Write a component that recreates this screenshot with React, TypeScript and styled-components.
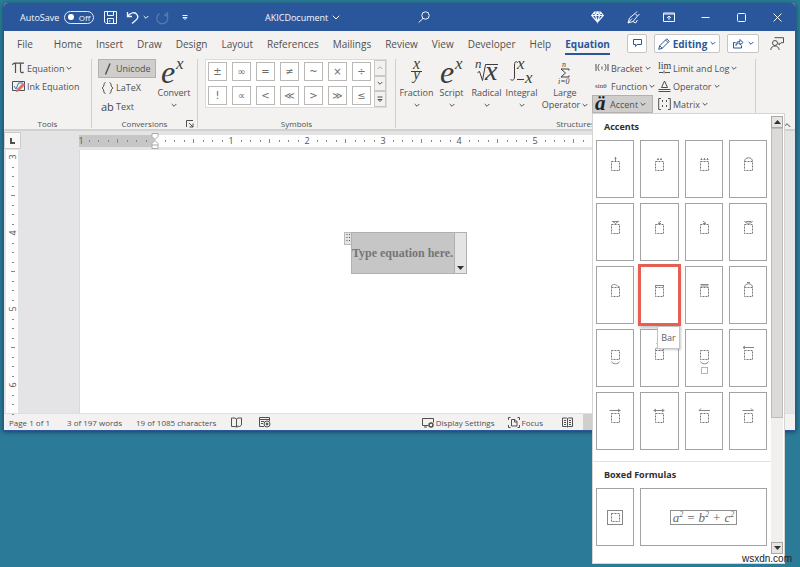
import React from "react";
import styled, { createGlobalStyle, css } from "styled-components";

const UI = `"Open Sans", "Noto Sans", sans-serif`;
const MATH = `"Liberation Serif", serif`;

const Global = createGlobalStyle`
  * { box-sizing: border-box; }
  body { margin: 0; background: #2b7b98; font-family: ${UI}; color: #505050; }
  button { font: inherit; color: inherit; background: none; border: 0; padding: 0; margin: 0; white-space: nowrap; }
  svg { display: block; flex: none; overflow: visible; }
  h2 { margin: 0; }
`;

const Desktop = styled.div`
  position: relative;
  min-height: 100vh;
  padding: 3px 4px 4px 3px;
`;

const WordWindow = styled.main`
  border: 1px solid #2b579a;
  border-top: 0;
  border-radius: 4px 4px 0 0;
  box-shadow: 0 1px 4px rgba(0, 20, 50, 0.55);
  background: #f3f2f1;
`;

/* Title bar */
const TitleBar = styled.header`
  display: grid;
  grid-template-columns: 33% 153px 1fr auto;
  align-items: center;
  height: 28px;
  border-radius: 4px 4px 0 0;
  background: #2a579b;
  color: #f4f7fc;
  font-size: 9px;
`;
const QuickAccess = styled.div`
  display: flex;
  align-items: center;
  padding-left: 16px;
`;
const AutoSave = styled.label`
  display: flex;
  align-items: center;
  gap: 5px;
`;
const Toggle = styled.button`
  display: flex;
  align-items: center;
  gap: 5px;
  width: 30px;
  height: 13px;
  padding: 0 3px;
  border: 1px solid #e4ebf6;
  border-radius: 7px;
  font-size: 8px;
  line-height: 11px;
`;
const Knob = styled.span`
  width: 6px;
  height: 6px;
  border-radius: 50%;
  background: #fff;
`;
const QuickButton = styled.button<{ $gap: number; $dim?: boolean }>`
  margin-left: ${(p) => p.$gap}px;
  opacity: ${(p) => (p.$dim ? 0.22 : 1)};
`;
const DocTitle = styled.button`
  display: flex;
  align-items: center;
  gap: 4px;
  justify-self: start;
`;
const SearchButton = styled.button`
  justify-self: start;
`;
const WindowButtons = styled.div`
  display: flex;
`;
const WindowButton = styled.button`
  display: grid;
  place-items: center;
  width: 36px;
  height: 28px;
`;

/* Tabs */
const TabRow = styled.nav`
  display: flex;
  align-items: center;
  height: 25px;
  padding: 0 11px 0 6px;
`;
const Tab = styled.button<{ $active?: boolean; $first?: boolean }>`
  height: 23px;
  padding: 1px 7px 0;
  margin-right: ${(p) => (p.$first ? 7 : 0)}px;
  font-size: 10px;
  line-height: 18px;
  span {
    display: block;
  }
  ${(p) =>
    p.$active &&
    css`
      color: #2a579b;
      font-weight: 700;
      span {
        box-shadow: 0 2px 0 #2a579b;
      }
    `}
`;
const TabTools = styled.div`
  display: flex;
  align-items: center;
  gap: 7px;
  margin-left: auto;
`;
const ToolButton = styled.button<{ $width: number }>`
  display: flex;
  align-items: center;
  justify-content: center;
  gap: 3px;
  width: ${(p) => p.$width}px;
  height: 19px;
  border: 1px solid #c6c5c4;
  border-radius: 2px;
  background: #fff;
  color: #2a579b;
  font-size: 10px;
  font-weight: 700;
`;
const PresenceButton = styled.button`
  margin-left: 4px;
`;

/* Ribbon */
const Ribbon = styled.section`
  display: flex;
  height: 75px;
  padding: 3px 0 1px;
  border-bottom: 2px solid #d2d1d0;
`;
const Group = styled.section<{ $width: number; $pad: number }>`
  display: flex;
  flex-direction: column;
  justify-content: space-between;
  width: ${(p) => p.$width}px;
  padding-left: ${(p) => p.$pad}px;
  border-right: 1px solid #d0cfce;
`;
const GroupBody = styled.div<{ $gap?: number }>`
  display: flex;
  align-items: flex-start;
  gap: ${(p) => p.$gap ?? 0}px;
`;
const GroupFooter = styled.footer<{ $pad: number }>`
  display: flex;
  justify-content: center;
  align-items: center;
  height: 8px;
  margin-left: -${(p) => p.$pad}px;
  font-size: 8px;
  line-height: 8px;
`;
const Launcher = styled.button`
  position: absolute;
  right: 3px;
  bottom: 0;
`;
const LauncherGroup = styled(Group)`
  position: relative;
`;
const Stack = styled.div<{ $width?: number }>`
  display: flex;
  flex-direction: column;
  width: ${(p) => (p.$width ? `${p.$width}px` : "auto")};
`;
const SmallButton = styled.button<{ $height: number; $on?: boolean }>`
  display: flex;
  align-items: center;
  gap: 2px;
  width: 100%;
  height: ${(p) => p.$height}px;
  padding: 0 2px;
  border: 1px solid ${(p) => (p.$on ? "#b3b2b1" : "transparent")};
  background: ${(p) => (p.$on ? "#cfcecd" : "transparent")};
  font-size: 9px;
`;
const LargeButton = styled.button<{ $width: number }>`
  display: flex;
  flex-direction: column;
  align-items: center;
  width: ${(p) => p.$width}px;
  font-size: 9px;
  line-height: 12px;
`;
const LabelRow = styled.span`
  display: flex;
  align-items: center;
  gap: 2px;
`;
const ChevronSlot = styled.span`
  display: grid;
  place-items: center;
  height: 12px;
`;

const Gallery = styled.div`
  display: flex;
  width: 182px;
  height: 49px;
  background: #fff;
  border: 1px solid #dddcdb;
`;
const SymbolGrid = styled.div`
  display: grid;
  grid-template-columns: repeat(7, 19px);
  grid-auto-rows: 19px;
  gap: 5px;
  padding: 2px;
`;
const SymbolButton = styled.button`
  border: 1px solid #b9b8b7;
  background: #fff;
  color: #6c6c6c;
  font-family: "DejaVu Sans", sans-serif;
  font-size: 10px;
  line-height: 16px;
`;
const GalleryScroll = styled.div`
  display: grid;
  grid-template-rows: repeat(3, 1fr);
  width: 12px;
  margin-left: auto;
`;
const GalleryArrow = styled.button`
  display: grid;
  place-items: center;
  border: 1px solid #c9c8c7;
  background: #f3f2f1;
`;
const MenuAnchor = styled.div`
  position: relative;
`;
const CollapseButton = styled.button`
  align-self: flex-end;
  margin-left: auto;
  margin-right: 4px;
`;

/* Accent menu */
const Menu = styled.div`
  position: absolute;
  z-index: 2;
  top: 100%;
  left: 0;
  display: flex;
  width: 193px;
  padding: 2px 1px 9px 0;
  border: 1px solid #d6d5d4;
  background: #fff;
  color: #333;
`;
const MenuBody = styled.div`
  flex: 1;
  padding-bottom: 8px;
`;
const MenuHeading = styled.h2`
  padding-left: 11px;
  font-size: 9px;
  line-height: 22px;
  font-weight: 700;
  color: #2f2f2f;
`;
const CardGrid = styled.div<{ $columns: string }>`
  display: grid;
  grid-template-columns: ${(p) => p.$columns};
  grid-auto-rows: 58px;
  gap: 5px 6px;
  padding: 2px 4px 0 3px;
`;
const Card = styled.button<{ $selected?: boolean }>`
  position: relative;
  display: grid;
  place-items: center;
  border: 1px solid #a3a3a3;
  background: #fff;
  ${(p) =>
    p.$selected &&
    css`
      outline: 2px solid #e75e54;
      border-color: #e75e54;
      box-shadow: 0 3px 4px 1px rgba(0, 0, 0, 0.25);
    `}
`;
const Divider = styled.hr`
  height: 1px;
  margin: 11px 0 2px;
  border: 0;
  background: #e3e2e1;
`;
const Tooltip = styled.span`
  position: absolute;
  z-index: 3;
  left: 16px;
  top: 59px;
  padding: 3px;
  border: 1px solid #c4c4c4;
  background: #fff;
  font-size: 9px;
  line-height: 15px;
  color: #606060;
  box-shadow: 1px 1px 2px rgba(0, 0, 0, 0.2);
`;
const Formula = styled.span`
  padding: 0 2px;
  border: 1px solid #8f8f8f;
  color: #666;
  font: italic 13px/13px ${MATH};
  sup {
    font-size: 8px;
    line-height: 1px;
  }
`;
const ScrollTrack = styled.div`
  display: flex;
  flex-direction: column;
  width: 12px;
  background: #f1f0ef;
`;
const ScrollArrow = styled.button`
  display: grid;
  place-items: center;
  height: 12px;
  border: 1px solid #aaa9a8;
  background: #e6e5e4;
`;
const ScrollThumb = styled.div`
  height: 290px;
  margin-bottom: auto;
  border: 1px solid #bdbcbb;
  background: #dbdad9;
`;

/* Document */
const RulerRow = styled.div`
  display: flex;
  align-items: center;
  height: 19px;
  background: #e4e4e4;
`;
const TabStop = styled.button`
  display: grid;
  place-items: center;
  width: 17px;
  height: 17px;
  border: 1px solid #cbcbcb;
  background: #f8f8f8;
`;
const HorizontalRuler = styled.div`
  flex: 1;
  min-width: 0;
  height: 16px;
  margin-left: 58px;
  margin-right: 11px;
  overflow: hidden;
`;
const Workspace = styled.div`
  display: flex;
  min-height: 263px;
  background: #e4e4e6;
`;
const VerticalRuler = styled.div`
  width: 12px;
  margin-left: 2px;
  background: #fdfdfd;
`;
const Paper = styled.article`
  flex: 1;
  margin-left: 61px;
  margin-right: 11px;
  padding: 82px 54px 0 0;
  border-left: 1px solid #d8d8d8;
  background: #fff;
  display: flex;
  justify-content: center;
  align-items: flex-start;
`;
const EquationBox = styled.div`
  display: flex;
  align-items: flex-start;
`;
const EquationHandle = styled.button`
  width: 7px;
  height: 13px;
  display: grid;
  place-items: center;
  border: 1px solid #b9b9b9;
  border-right: 0;
  background: #e4e4e4;
`;
const EquationFrame = styled.div`
  display: flex;
  height: 42px;
  border: 1px solid #b0b0b0;
`;
const EquationInput = styled.input`
  width: 102px;
  padding: 0;
  border: 0;
  border-radius: 0;
  background: #c6c6c6;
  color: #757575;
  text-align: center;
  font: 700 12px ${MATH};
`;
const EquationMenu = styled.button`
  display: flex;
  align-items: flex-end;
  justify-content: center;
  width: 12px;
  padding-bottom: 3px;
  border-left: 1px solid #b0b0b0;
  background: #e4e4e4;
`;

/* Status bar */
const StatusBar = styled.footer`
  display: flex;
  align-items: center;
  height: 17px;
  padding-left: 5px;
  border-top: 1px solid #e0dfde;
  font-size: 8px;
`;
const StatusButton = styled.button<{ $gap?: number }>`
  display: flex;
  align-items: center;
  gap: 2px;
  height: 100%;
  margin-right: ${(p) => p.$gap ?? 0}px;
`;
const StatusRight = styled.div`
  display: flex;
  align-items: center;
  height: 100%;
  margin-left: auto;
`;
const ViewMode = styled.span`
  width: 212px;
  height: 100%;
  background: linear-gradient(to right, #d0cfce 24px, transparent 24px);
`;
const Watermark = styled.span`
  position: absolute;
  z-index: 4;
  right: 8px;
  bottom: 1px;
  color: #222;
  font: 10px/14px "Liberation Sans", sans-serif;
`;

/* Icons */
type IconProps = { w: number; h: number; children: React.ReactNode };
const Icon = ({ w, h, children }: IconProps) => (
  <svg width={w} height={h} viewBox={`0 0 ${w} ${h}`} fill="none" stroke="currentColor" strokeWidth="1" aria-hidden="true">
    {children}
  </svg>
);
const Chevron = () => (
  <Icon w={6} h={5}>
    <path d="M.7 1 3 3.3 5.3 1" />
  </Icon>
);
type GlyphProps = { x: number; y: number; size: number; upright?: boolean; children: string };
const Glyph = ({ x, y, size, upright, children }: GlyphProps) => (
  <text x={x} y={y} fontSize={size} fill="#3c3c3c" stroke="none" fontFamily={MATH} fontStyle={upright ? "normal" : "italic"}>
    {children}
  </text>
);
const ExpIcon = ({ wide }: { wide?: boolean }) => (
  <Icon w={wide ? 24 : 26} h={28}>
    <Glyph x={0} y={24} size={32}>e</Glyph>
    <Glyph x={15} y={10} size={17}>x</Glyph>
  </Icon>
);
const FractionIcon = () => (
  <Icon w={14} h={28}>
    <Glyph x={3} y={10} size={16}>x</Glyph>
    <path d="M1 12.500h11" stroke="#3c3c3c" />
    <Glyph x={3} y={20} size={16}>y</Glyph>
  </Icon>
);
const RadicalIcon = () => (
  <Icon w={24} h={28}>
    <Glyph x={0} y={9} size={13}>n</Glyph>
    <path d="M2.500 13.500l2-1 3 9L10.500 5.500H23" stroke="#3c3c3c" />
    <Glyph x={10} y={21} size={28}>x</Glyph>
  </Icon>
);
const IntegralIcon = () => (
  <Icon w={24} h={28}>
    <path d="M7.500 4C6.500 1.500 4.500 2.500 4.500 6v12c0 3-2 4-4 2.500" stroke="#3c3c3c" />
    <Glyph x={7} y={10} size={17}>x</Glyph>
    <path d="M7 20.500h7" stroke="#3c3c3c" />
    <Glyph x={15} y={24} size={17}>x</Glyph>
  </Icon>
);
const SumIcon = () => (
  <Icon w={16} h={28}>
    <Glyph x={5} y={8} size={8}>n</Glyph>
    <path d="M12 11.500V10H4l4.500 4L4 18h8v-1.500" stroke="#3c3c3c" />
    <Glyph x={1} y={25} size={8}>i=0</Glyph>
  </Icon>
);

type AccentKind =
  | "dot" | "ddot" | "dddot" | "hat" | "check" | "acute" | "grave" | "breve"
  | "tilde" | "bar" | "dbar" | "overbrace" | "underbrace" | "overbraceText" | "underbraceText"
  | "leftArrow" | "rightArrow" | "bothArrow" | "leftHarpoon" | "rightHarpoon";

const MARKS: Record<AccentKind, string> = {
  dot: "M11.500 5.500h2M12.500 4v4",
  ddot: "M10 6.500h2M13 6.500h2M11 5v2M14 5v2",
  dddot: "M8.500 6.500h2M11.500 6.500h2M14.500 6.500h2M9.500 5v2M12.500 5v2M15.500 5v2",
  hat: "M8.500 8.500c0-5 8-5 8 0",
  check: "M9 5l3.500 2.500 3.500-2.500M10 5.500h5",
  acute: "M11 7.500l3-2.500M11 7.500h3",
  grave: "M11 5l3 2.500M11 7.500h3",
  breve: "M8.500 5c1 3 7 3 8 0M10 5.500h5",
  tilde: "M8.500 8c0-3.500 4-2.500 4.500-2s2.500 1.500 3.500 2",
  bar: "M8.500 6.500h8M8.500 6v2M16.500 6v2",
  dbar: "M8.500 5.500h8M8.500 7h8",
  overbrace: "M8.500 8.500c0-5 8-5 8 0M11 3.500h3",
  underbrace: "M8.500 19.500c1 3 7 3 8 0",
  overbraceText: "M8.500 8c0-4 8-4 8 0M9.500 1.500h5",
  underbraceText: "M8.500 19.500c1 3 7 3 8 0",
  leftArrow: "M7 5.500h11M9 4l-2 1.500 2 1.500",
  rightArrow: "M6.500 5.500h11M15 4l2 1.500-2 1.500",
  bothArrow: "M6.500 5.500h11M9 4l-2 1.500 2 1.500M15 4l2 1.500-2 1.500",
  leftHarpoon: "M7 5.500h11M9 3.500l-2 2",
  rightHarpoon: "M6.500 5.500h11M15 3.500l2 2",
};
const ACCENTS = Object.keys(MARKS) as AccentKind[];

const AccentIcon = ({ kind }: { kind: AccentKind }) => (
  <Icon w={24} h={32}>
    <rect x="8.500" y="8.500" width="8" height="9" stroke="#777" strokeDasharray="2 1" />
    <path d={MARKS[kind]} stroke="#858585" />
    {kind === "underbraceText" && <rect x="9.500" y="25.500" width="6" height="6" stroke="#b5b5b5" />}
  </Icon>
);
const BoxIcon = () => (
  <Icon w={16} h={15}>
    <rect x=".5" y=".5" width="15" height="14" stroke="#888" />
    <rect x="4.500" y="3.500" width="8" height="8" stroke="#777" strokeDasharray="2 1" />
  </Icon>
);
const Triangle = ({ up }: { up?: boolean }) => (
  <Icon w={7} h={4}>
    <path d={up ? "M0 4 3.500 0 7 4z" : "M0 0h7L3.500 4z"} fill="#333" stroke="none" />
  </Icon>
);
const LauncherIcon = () => (
  <Icon w={8} h={8}>
    <path d="M.5 7V.5H7M3 3l4 4M7 3.500V7H3.500" />
  </Icon>
);

const INCH = 76;
const HorizontalScale = () => (
  <svg width="100%" height="16" aria-hidden="true">
    <rect x="0" y="2" width={INCH} height="12" fill="#c6c6c6" />
    <rect x={INCH} y="2" width="100%" height="12" fill="#fdfdfd" />
    {Array.from({ length: 72 }, (_, i) => {
      const x = (i * INCH) / 8;
      if (i % 8 === 0) {
        if (i === 8) return null;
        return (
          <text key={i} x={x + (i ? 0 : 2)} y="11" fontSize="9" textAnchor="middle" fill="#555">
            {Math.abs(i / 8 - 1)}
          </text>
        );
      }
      const half = i % 4 === 0;
      return <rect key={i} x={Math.round(x)} y={half ? 6 : 7} width="1" height={half ? 4 : 2} fill="#888" />;
    })}
    <path d={`M${INCH - 3} .5h6v3l-3 3-3-3zM${INCH - 3} 15.500v-5l3-3 3 3v5zM${INCH - 3} 12h6`} fill="#fff" stroke="#aaa" />
  </svg>
);
const VerticalScale = () => (
  <svg width="12" height="263" aria-hidden="true">
    {Array.from({ length: 28 }, (_, i) => {
      const y = 7 + (i * INCH) / 8;
      if (i % 8 === 0)
        return (
          <text key={i} x="0" y="0" transform={`translate(10 ${y}) rotate(-90)`} fontSize="9" textAnchor="middle" fill="#555">
            {3 + i / 8}
          </text>
        );
      const half = i % 4 === 0;
      return <rect key={i} x={half ? 5 : 6} y={Math.round(y)} width={half ? 4 : 2} height="1" fill="#888" />;
    })}
  </svg>
);

const TABS = ["File", "Home", "Insert", "Draw", "Design", "Layout", "References", "Mailings", "Review", "View", "Developer", "Help", "Equation"];
const SYMBOLS = ["±", "∞", "=", "≠", "~", "×", "÷", "!", "∝", "<", "≪", ">", "≫", "≤"];
const LARGE = [
  { label: "Fraction", icon: <FractionIcon /> },
  { label: "Script", icon: <ExpIcon wide /> },
  { label: "Radical", icon: <RadicalIcon /> },
  { label: "Integral", icon: <IntegralIcon /> },
];

const AccentMenu = () => (
  <Menu role="menu" aria-label="Accents">
    <MenuBody>
      <MenuHeading>Accents</MenuHeading>
      <CardGrid $columns="repeat(4, 1fr)">
        {ACCENTS.map((kind) => (
          <Card key={kind} $selected={kind === "bar"} aria-label={kind}>
            <AccentIcon kind={kind} />
            {kind === "bar" && <Tooltip role="tooltip">Bar</Tooltip>}
          </Card>
        ))}
      </CardGrid>
      <Divider />
      <MenuHeading>Boxed Formulas</MenuHeading>
      <CardGrid $columns="38px 1fr">
        <Card aria-label="Box">
          <BoxIcon />
        </Card>
        <Card>
          <Formula>
            a<sup>2</sup> = b<sup>2</sup> + c<sup>2</sup>
          </Formula>
        </Card>
      </CardGrid>
    </MenuBody>
    <ScrollTrack>
      <ScrollArrow aria-label="Scroll up">
        <Triangle up />
      </ScrollArrow>
      <ScrollThumb />
      <ScrollArrow aria-label="Scroll down">
        <Triangle />
      </ScrollArrow>
    </ScrollTrack>
  </Menu>
);

export default function App() {
  return (
    <Desktop>
      <Global />
      <WordWindow>
        <TitleBar>
          <QuickAccess>
            <AutoSave>
              AutoSave
              <Toggle role="switch" aria-checked="false">
                <Knob />
                Off
              </Toggle>
            </AutoSave>
            <QuickButton $gap={10} aria-label="Save">
              <Icon w={13} h={13}>
                <path d="M.5.500h12v12H2L.5 11zM3.500.500v4h6v-4M3.500 12.500v-5h6v5M5 10h1.500" />
              </Icon>
            </QuickButton>
            <QuickButton $gap={9} aria-label="Undo">
              <Icon w={13} h={13}>
                <path strokeWidth="1.3" d="M1.500 1v4.500H6M1.500 5.500C4 2 8 .5 10.500 3S11.500 8 9.500 9.500L6 12.500" />
              </Icon>
            </QuickButton>
            <QuickButton $gap={4} aria-label="Undo options">
              <Chevron />
            </QuickButton>
            <QuickButton $gap={7} $dim aria-label="Redo">
              <Icon w={13} h={13}>
                <path strokeWidth="1.300" d="M11.500 1v3.500H8M9 2.500A5.500 5.500 0 1 1 3.500 2.500" />
              </Icon>
            </QuickButton>
            <QuickButton $gap={13} aria-label="Customize toolbar">
              <Icon w={6} h={7}>
                <path d="M.5 1.500h5M1 3.500h4L3 5.500z" />
              </Icon>
            </QuickButton>
          </QuickAccess>
          <DocTitle>
            AKICDocument
            <Icon w={8} h={5}>
              <path d="M.7.700 4 4 7.300.700" />
            </Icon>
          </DocTitle>
          <SearchButton aria-label="Search">
            <Icon w={12} h={12}>
              <circle cx="7.500" cy="4.500" r="3.700" />
              <path d="M5 7.500.7 11.500" />
            </Icon>
          </SearchButton>
          <WindowButtons>
            <WindowButton aria-label="Premium">
              <Icon w={13} h={12}>
                <path strokeWidth="1.200" d="M3.500 1h6L12.300 4.500 6.500 11 .7 4.500zM.7 4.500h11.600M3.500 1l1 3.500 2 6.500 2-6.500 1-3.500M4.500 4.500l2-3.500 2 3.500" />
              </Icon>
            </WindowButton>
            <WindowButton aria-label="Ink">
              <Icon w={13} h={13}>
                <path d="M1 12l1.500-5L8 2.500l2.500 2.500L6 10.500zM8 2.500l2-2M10.500 5l2-2M1 12l4-4.500M6 10.500l2.500 1.500 2-3" />
              </Icon>
            </WindowButton>
            <WindowButton aria-label="Ribbon display options">
              <Icon w={12} h={10}>
                <path d="M.5 1h11v8.500H.5zM.5 2h11M6 8V4M4 6l2-2 2 2" />
              </Icon>
            </WindowButton>
            <WindowButton aria-label="Minimize">
              <Icon w={9} h={9}>
                <path d="M.5 4.500h8" />
              </Icon>
            </WindowButton>
            <WindowButton aria-label="Maximize">
              <Icon w={9} h={9}>
                <rect x=".5" y=".5" width="8" height="8" rx="1" />
              </Icon>
            </WindowButton>
            <WindowButton aria-label="Close">
              <Icon w={9} h={9}>
                <path d="M.5.500l8 8M8.500.500l-8 8" />
              </Icon>
            </WindowButton>
          </WindowButtons>
        </TitleBar>

        <TabRow>
          {TABS.map((name) => (
            <Tab key={name} $active={name === "Equation"} $first={name === "File"}>
              <span>{name}</span>
            </Tab>
          ))}
          <TabTools>
            <ToolButton $width={20} aria-label="Comments">
              <Icon w={9} h={9}>
                <path d="M.5.500h8v5H4L2.500 7.500v-2h-2z" />
              </Icon>
            </ToolButton>
            <ToolButton $width={66}>
              <Icon w={12} h={12}>
                <path d="M.7 11.300l1-3.500 7-7 2.500 2.500-7 7zM7.500 2l2.500 2.500M1.700 7.800l2.500 2.500" />
              </Icon>
              Editing
              <Chevron />
            </ToolButton>
            <ToolButton $width={32} aria-label="Share">
              <Icon w={13} h={11}>
                <path d="M3.500 4.500h-2v5.500h8V7.500M4 7.500c0-3 1-4 4-4V1.500L11 4.500 8 7V5C6 5 5 5.500 4 7.500z" />
              </Icon>
              <Chevron />
            </ToolButton>
            <PresenceButton aria-label="Presence">
              <Icon w={14} h={14}>
                <path d="M4.500.700h9v5h-2.500L9 8V5.700M.7 13c.5-3 2-4 4.300-4s3.500 1 4.300 4" />
                <circle cx="5" cy="6" r="2.500" />
              </Icon>
            </PresenceButton>
          </TabTools>
        </TabRow>

        <Ribbon>
          <Group $width={88} $pad={5}>
            <Stack>
              <SmallButton $height={18}>
                <Icon w={13} h={12}>
                  <path strokeWidth="1.200" d="M.5 3C1 1.200 2 1.200 3 1.200h9M3.500 1.200V11M8.500 1.200V9c0 2 2 2 3 1" />
                </Icon>
                Equation
                <Chevron />
              </SmallButton>
              <SmallButton $height={18}>
                <Icon w={13} h={12}>
                  <path d="M.5 1.500h12v9H.5z" />
                  <path d="M2 6l2 3 2.500-6H11" stroke="#2a79c0" />
                  <path d="M4.500 11.500l1-2.500L11 3.500l1.500 1.500L7 10.500z" fill="#e06a5f" stroke="#e06a5f" />
                </Icon>
                Ink Equation
              </SmallButton>
            </Stack>
            <GroupFooter $pad={5}>Tools</GroupFooter>
          </Group>

          <LauncherGroup $width={106} $pad={6}>
            <GroupBody>
              <Stack $width={58}>
                <SmallButton $height={19} $on>
                  <Icon w={13} h={12}>
                    <path strokeWidth="1.400" d="M9 .5 4.500 11.500" />
                  </Icon>
                  Unicode
                </SmallButton>
                <SmallButton $height={19}>
                  <Icon w={13} h={12}>
                    <path d="M4.500.500C2 .5 4 5 1 6c3 1 .5 5.500 3.500 5.500M8.500.500c2.500 0 .5 4.500 3.500 5.500-3 1-1 5.500-3.500 5.500" />
                  </Icon>
                  LaTeX
                </SmallButton>
                <SmallButton $height={19}>
                  <Icon w={13} h={12}>
                    <text x="0" y="10" fontSize="11" fill="#444" stroke="none">ab</text>
                  </Icon>
                  Text
                </SmallButton>
              </Stack>
              <LargeButton $width={36}>
                <ExpIcon />
                Convert
                <ChevronSlot>
                  <Chevron />
                </ChevronSlot>
              </LargeButton>
            </GroupBody>
            <GroupFooter $pad={6}>Conversions</GroupFooter>
            <Launcher aria-label="Conversion settings">
              <LauncherIcon />
            </Launcher>
          </LauncherGroup>

          <Group $width={198} $pad={7}>
            <Gallery>
              <SymbolGrid>
                {SYMBOLS.map((symbol) => (
                  <SymbolButton key={symbol}>{symbol}</SymbolButton>
                ))}
              </SymbolGrid>
              <GalleryScroll>
                <GalleryArrow aria-label="Previous row">
                  <Icon w={6} h={5}>
                    <path d="M.7 4 3 1.700 5.300 4" stroke="#aaa" />
                  </Icon>
                </GalleryArrow>
                <GalleryArrow aria-label="Next row">
                  <Chevron />
                </GalleryArrow>
                <GalleryArrow aria-label="More symbols">
                  <Icon w={6} h={7}>
                    <path d="M.5 1h5M1 3.500h4L3 5.500z" />
                  </Icon>
                </GalleryArrow>
              </GalleryScroll>
            </Gallery>
            <GroupFooter $pad={7}>Symbols</GroupFooter>
          </Group>

          <Group $width={360} $pad={4}>
            <GroupBody $gap={2}>
              {LARGE.map(({ label, icon }) => (
                <LargeButton key={label} $width={33}>
                  {icon}
                  {label}
                  <ChevronSlot>
                    <Chevron />
                  </ChevronSlot>
                </LargeButton>
              ))}
              <LargeButton $width={50}>
                <SumIcon />
                Large
                <LabelRow>
                  Operator
                  <Chevron />
                </LabelRow>
              </LargeButton>
              <Stack $width={61}>
                <SmallButton $height={18}>
                  <Icon w={14} h={12}>
                    <path d="M1 2v7M13 2v7M4.500 2c-2 2-2 5 0 7M9.500 2c2 2 2 5 0 7M7 4.500v3" />
                  </Icon>
                  Bracket
                  <Chevron />
                </SmallButton>
                <SmallButton $height={18}>
                  <Icon w={14} h={12}>
                    <Glyph x={0} y={8} size={7} upright>sinθ</Glyph>
                  </Icon>
                  Function
                  <Chevron />
                </SmallButton>
                <MenuAnchor>
                  <SmallButton $height={18} $on aria-haspopup="menu" aria-expanded="true">
                    <Icon w={13} h={14}>
                      <text x="0" y="13" fontSize="21" fontWeight="700" fontStyle="italic" fontFamily={MATH} fill="#222" stroke="none">ä</text>
                    </Icon>
                    Accent
                    <Chevron />
                  </SmallButton>
                  <AccentMenu />
                </MenuAnchor>
              </Stack>
              <Stack $width={88}>
                <SmallButton $height={18}>
                  <Icon w={13} h={12}>
                    <Glyph x={0} y={7} size={10} upright>lim</Glyph>
                    <path d="M1 10.500h4M7 10.500h5M6 8.500v3" />
                  </Icon>
                  Limit and Log
                  <Chevron />
                </SmallButton>
                <SmallButton $height={18}>
                  <Icon w={13} h={12}>
                    <path d="M3.500 7.500 6.500 1l3 6.500zM.5 9.500h12M.5 11.500h12" />
                  </Icon>
                  Operator
                  <Chevron />
                </SmallButton>
                <SmallButton $height={18}>
                  <Icon w={13} h={12}>
                    <path d="M3 .5H.7v11H3M10 .5h2.300v11H10" />
                    <path d="M4.500 2v3M8.500 2v3M4.500 7v3M8.500 7v3" strokeDasharray="2 1" />
                  </Icon>
                  Matrix
                  <Chevron />
                </SmallButton>
              </Stack>
            </GroupBody>
            <GroupFooter $pad={4}>Structures</GroupFooter>
          </Group>
          <CollapseButton aria-label="Collapse ribbon">
            <Icon w={8} h={5}>
              <path d="M.7 4 4 .7 7.300 4" />
            </Icon>
          </CollapseButton>
        </Ribbon>

        <RulerRow>
          <TabStop aria-label="Tab stop">
            <Icon w={5} h={6}>
              <path strokeWidth="2" d="M1 0v5h4" />
            </Icon>
          </TabStop>
          <HorizontalRuler>
            <HorizontalScale />
          </HorizontalRuler>
        </RulerRow>

        <Workspace>
          <VerticalRuler>
            <VerticalScale />
          </VerticalRuler>
          <Paper>
            <EquationBox>
              <EquationHandle aria-label="Move equation">
                <Icon w={4} h={9}>
                  <path d="M1 0v9M3.500 0v9" strokeDasharray="1 2" />
                </Icon>
              </EquationHandle>
              <EquationFrame>
                <EquationInput aria-label="Equation" defaultValue="Type equation here." />
                <EquationMenu aria-label="Equation options">
                  <Triangle />
                </EquationMenu>
              </EquationFrame>
            </EquationBox>
          </Paper>
        </Workspace>

        <StatusBar>
          <StatusButton $gap={17}>Page 1 of 1</StatusButton>
          <StatusButton $gap={14}>3 of 197 words</StatusButton>
          <StatusButton $gap={15}>19 of 1085 characters</StatusButton>
          <StatusButton $gap={17} aria-label="Proofing">
            <Icon w={11} h={11}>
              <path d="M5.500 2v8L4 9.500H.5V1H4zl1.500-1h3.500v6M5.500 10l2-.5M7 8.500l1.500 1.500 2.500-3" />
            </Icon>
          </StatusButton>
          <StatusButton aria-label="Macro recording">
            <Icon w={12} h={11}>
              <path d="M10.500 4V.5H.5v9H5M.5 2.500h10M2 4.500h3M2 6.500h2" />
              <circle cx="8" cy="7" r="3" />
              <circle cx="8" cy="7" r="1" fill="currentColor" />
            </Icon>
          </StatusButton>
          <StatusRight>
            <StatusButton $gap={13}>
              <Icon w={12} h={11}>
                <path d="M6 8.500H.5v-7h11v4M2 10h3" />
                <circle cx="9" cy="8" r="2" strokeWidth="1.500" />
              </Icon>
              Display Settings
            </StatusButton>
            <StatusButton $gap={19}>
              <Icon w={12} h={11}>
                <path d="M.5 3V.5H2.500M9.500.5h2V3M.5 8v2.500h2M11.500 8v2.500h-2M3.500 2.500H7l2 2v4.500H3.500zM6.500 2.500v2.500H9" />
              </Icon>
              Focus
            </StatusButton>
            <StatusButton $gap={10} aria-label="Read mode">
              <Icon w={11} h={11}>
                <path d="M5.500 1.500v8.500M.5 1h4l1 .5 1-.5h4v8.500h-4l-1 .5-1-.5h-4zM2 3.500h2M2 5.500h2M2 7.500h2M7 3.500h2M7 5.500h2M7 7.500h2" />
              </Icon>
            </StatusButton>
            <ViewMode />
          </StatusRight>
        </StatusBar>
      </WordWindow>
      <Watermark>wsxdn.com</Watermark>
    </Desktop>
  );
}
